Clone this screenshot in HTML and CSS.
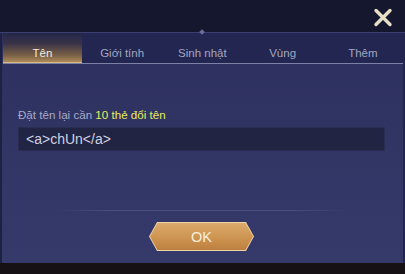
FILE: index.html
```html
<!DOCTYPE html>
<html lang="vi">
<head>
<meta charset="utf-8">
<link rel="stylesheet" href="styles.css">
</head>
<body>
<div class="panel">
  <div class="header">
    <svg class="close" width="20" height="19" viewBox="0 0 20 19">
      <path d="M3 2.5 L17 16.5 M17 2.5 L3 16.5" stroke="#e6dfc6" stroke-width="3.4" stroke-linecap="round"/>
    </svg>
  </div>
  <div class="divider"><span class="gem"></span></div>
  <div class="tabs">
    <div class="tab active">Tên</div>
    <div class="tab">Giới tính</div>
    <div class="tab">Sinh nhật</div>
    <div class="tab">Vùng</div>
    <div class="tab">Thêm</div>
  </div>
  <div class="content">
    <div class="label">Đặt tên lại cần <span class="hl">10 thẻ đổi tên</span></div>
    <div class="input">&lt;a&gt;chUn&lt;/a&gt;</div>
    <div class="sep"></div>
    <div class="actions">
      <div class="ok"><div class="ok-inner">OK</div></div>
    </div>
  </div>
</div>
</body>
</html>
```
FILE: styles.css
```css
html, body {
  margin: 0;
  padding: 0;
}
body {
  width: 405px;
  height: 274px;
  overflow: hidden;
  background: #161114;
  font-family: "Liberation Sans", Arial, sans-serif;
}
.panel {
  height: 263px;
  display: flex;
  flex-direction: column;
  background: linear-gradient(#2c2f5c, #363a6b);
  border-left: 2px solid #1f2143;
  border-right: 2px solid #23264a;
  box-sizing: border-box;
}
.header {
  height: 32px;
  background: #15172f;
  display: flex;
  justify-content: flex-end;
  align-items: flex-start;
  margin: 0 -2px;
}
.close {
  margin: 8px 12px 0 0;
}
.divider {
  height: 1px;
  background: #3c4070;
  margin: 0 -2px;
  position: relative;
}
.gem {
  position: absolute;
  left: 200px;
  top: -2px;
  width: 4px;
  height: 4px;
  background: #6a6e98;
  transform: rotate(45deg);
}
.tabs {
  height: 30px;
  display: flex;
  background: #222650;
  border-bottom: 1px solid #7d81a6;
  margin-left: 1px;
}
.tab {
  flex: 1;
  display: flex;
  align-items: center;
  justify-content: center;
  padding-top: 10px;
  box-sizing: border-box;
  font-size: 11.5px;
  color: #a3a6c2;
}
.tab.active {
  flex: 0 0 79px;
  color: #f4ecdc;
  background: linear-gradient(#23264a 0%, #3a3348 35%, #7a6146 75%, #b4905e 100%);
  box-shadow: inset 0 -1px 0 #d8b880;
}
.content {
  flex: 1;
  display: flex;
  flex-direction: column;
  padding: 44px 18px 0 16px;
}
.label {
  font-size: 11.6px;
  color: #a6aacb;
  height: 14px;
  line-height: 14px;
}
.hl {
  color: #e8ec5e;
}
.input {
  margin-top: 5px;
  height: 24px;
  background: #212442;
  border: 1px solid #2a2d52;
  box-sizing: border-box;
  padding-left: 7px;
  display: flex;
  align-items: center;
  font-size: 14px;
  color: #cfd1e2;
}
.sep {
  margin: 59px 38px 0 37px;
  height: 1px;
  background: linear-gradient(90deg, rgba(80,86,140,0), #4a4f82 20%, #4a4f82 80%, rgba(80,86,140,0));
}
.actions {
  display: flex;
  justify-content: center;
  margin-top: 11px;
  margin-right: 0;
}
.ok {
  width: 105px;
  height: 29px;
  background: #ecd5a6;
  clip-path: polygon(8px 0, 97px 0, 105px 50%, 97px 100%, 8px 100%, 0 50%);
  display: flex;
}
.ok-inner {
  flex: 1;
  margin: 1px;
  clip-path: polygon(7.5px 0, calc(100% - 7.5px) 0, 100% 50%, calc(100% - 7.5px) 100%, 7.5px 100%, 0 50%);
  background: linear-gradient(#dcaa6a, #cc924f 60%, #bd7f40);
  display: flex;
  align-items: center;
  justify-content: center;
  font-size: 14.5px;
  color: #f8eedb;
}
```
